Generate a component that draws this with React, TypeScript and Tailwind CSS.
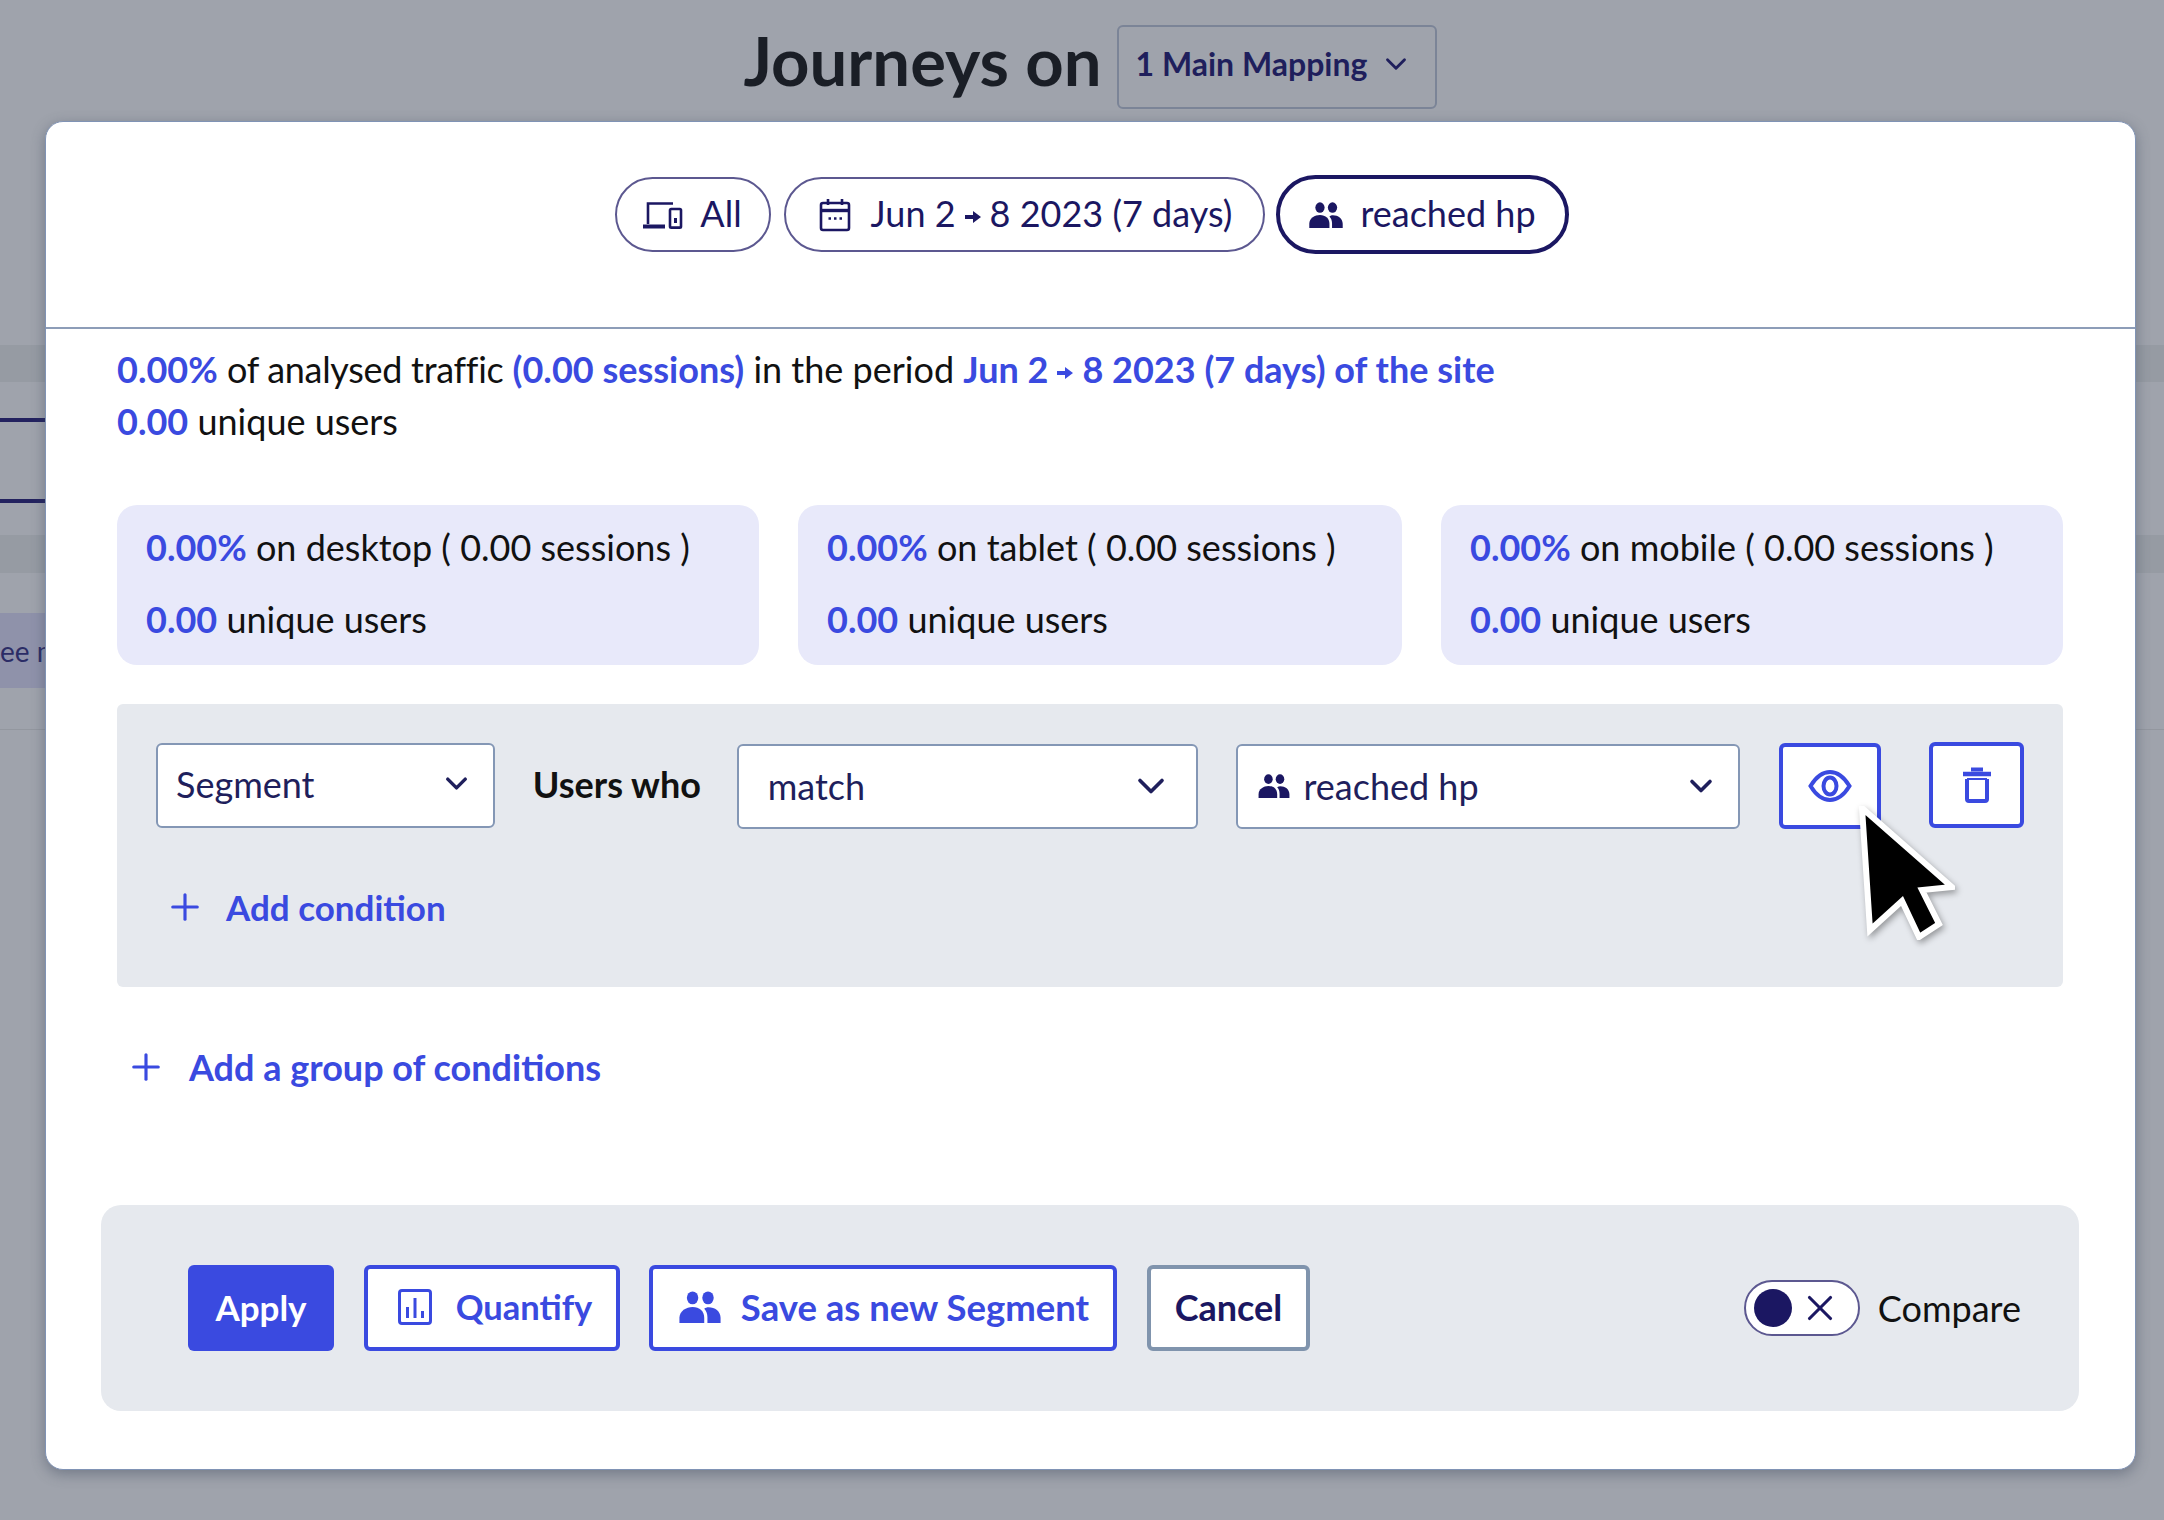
import { ChevronDown, Plus, X } from 'lucide-react';
import { twMerge } from 'tailwind-merge';

const font = { fontFamily: 'Lato, "Noto Sans", sans-serif' };

function DevicesIcon({ className }: { className?: string }) {
  return (
    <svg viewBox="0 0 40 30" className={className} fill="none" stroke="currentColor">
      <path d="M5 24V3.500h25" strokeWidth="2.600" />
      <path d="M0 26.500h22" strokeWidth="4" />
      <rect x="27" y="9" width="11" height="18.600" rx="1.200" strokeWidth="2.600" />
      <path d="M32.500 18v5" strokeWidth="3" />
    </svg>
  );
}

function CalendarIcon({ className }: { className?: string }) {
  return (
    <svg viewBox="0 0 32 34" className={className} fill="none" stroke="currentColor" strokeWidth="2.600">
      <rect x="2" y="5" width="28" height="27" rx="2" />
      <path d="M2 12.500h28" strokeWidth="3.400" />
      <path d="M9 1v6M23 1v6" />
      <path d="M9.500 20.500h2.500M15 20.500h2.500M20.500 20.500h2.500" />
    </svg>
  );
}

function PeopleIcon({ className }: { className?: string }) {
  return (
    <svg viewBox="0 0 36 28" className={className} fill="currentColor">
      <ellipse cx="11.500" cy="6" rx="5" ry="5.600" />
      <ellipse cx="25" cy="6" rx="5" ry="5.600" />
      <path d="M0 28v-4.500C0 17.500 6 14 11.500 14c3 0 5.600 1 7.500 2.600 1.700 1.600 2.700 4 2.700 6.900V28z" />
      <path d="M24.500 28v-5c0-3-1-5.600-2.800-7.500 1-.8 2.300-1.300 3.800-1.300 5.500 0 10.500 3.500 10.500 9.300V28z" />
    </svg>
  );
}

function EyeIcon({ className }: { className?: string }) {
  return (
    <svg viewBox="0 0 44 32" className={className} fill="none" stroke="currentColor" strokeWidth="4">
      <path d="M2.500 16C8 7 14 2 22 2s14 5 19.500 14C36 25 30 30 22 30S8 25 2.500 16z" />
      <ellipse cx="22" cy="16" rx="6.500" ry="8.500" />
    </svg>
  );
}

function TrashIcon({ className }: { className?: string }) {
  return (
    <svg viewBox="0 0 28 36" className={className} fill="none" stroke="currentColor">
      <path d="M0 7h28" strokeWidth="4.500" />
      <path d="M8 2.500h12" strokeWidth="4" />
      <path d="M4 12v20a2 2 0 0 0 2 2h16a2 2 0 0 0 2-2V12" strokeWidth="4" />
      <path d="M4 12h20" strokeWidth="2" />
    </svg>
  );
}

function ChartIcon({ className }: { className?: string }) {
  return (
    <svg viewBox="0 0 34 36" className={className} fill="none" stroke="currentColor">
      <rect x="1.500" y="1.500" width="31" height="33" rx="2.500" strokeWidth="3" />
      <path d="M9.500 18v11M17 9v20M24.500 22v7" strokeWidth="3" />
    </svg>
  );
}

function Arrow() {
  return (
    <svg viewBox="0 0 16 14" className="mx-[8px] inline-block h-[14px] w-[18px] align-[3px]" fill="currentColor">
      <path d="M0 5h8V1l8 6-8 6V9H0z" />
    </svg>
  );
}

function Pill({
  className,
  children,
}: {
  className?: string;
  children: React.ReactNode;
}) {
  return (
    <div
      className={twMerge(
        'flex h-[75px] items-center justify-center rounded-[38px] border-2 border-[#5c5890] bg-white pb-[3px] text-[36px] text-[#1b1762]',
        className,
      )}
    >
      {children}
    </div>
  );
}

function StatCard({ label, className }: { label: string; className: string }) {
  return (
    <div
      className={twMerge(
        'flex h-[160px] flex-col justify-between rounded-[20px] bg-[#e8e9fa] pb-[20px] pl-[29px] pt-[16px] text-[36px] leading-[52px] text-[#111]',
        className,
      )}
    >
      <div>
        <span className="font-bold text-[#3a4ae0]">0.00%</span> on {label} ( 0.00 sessions )
      </div>
      <div>
        <span className="font-bold text-[#3a4ae0]">0.00</span> unique users
      </div>
    </div>
  );
}

function OutlineButton({
  className,
  children,
}: {
  className?: string;
  children: React.ReactNode;
}) {
  return (
    <div
      className={twMerge(
        'flex h-[86px] items-center justify-center rounded-[6px] border-[4px] border-[#3a4ae0] bg-white text-[36px] font-bold text-[#3a4ae0]',
        className,
      )}
    >
      {children}
    </div>
  );
}

export default function App() {
  return (
    <div className="relative h-[1520px] w-[2164px] overflow-hidden bg-[#9fa3ac]" style={font}>
      {/* dimmed page behind the modal */}
      <div className="flex h-[345px] justify-center pl-[16px] pt-[25px]">
        <div className="flex h-[84px] items-center gap-[15px]">
          <span className="mt-[-14px] text-[67px] font-bold text-[#1a1e26]">Journeys on</span>
          <div className="flex h-[84px] w-[320px] items-center gap-[12px] rounded-[6px] border-2 border-[#7b8497] pb-[6px] pl-[17px] text-[32px] font-bold text-[#1f1f5c]">
            1 Main Mapping
            <ChevronDown className="h-[34px] w-[34px]" strokeWidth={2} />
          </div>
        </div>
      </div>
      <div className="h-[37px] bg-[#969ba3]" />
      <div className="h-[36px]" />
      <div className="h-[4px] w-[45px] bg-[#23225f]" />
      <div className="h-[77px]" />
      <div className="h-[4px] w-[45px] bg-[#23225f]" />
      <div className="h-[32px]" />
      <div className="h-[38px] bg-[#969ba3]" />
      <div className="h-[40px]" />
      <div className="flex h-[75px] w-[50px] items-center overflow-hidden whitespace-nowrap bg-[#8f92aa] text-[28px] text-[#2b2c66]">
        ee more
      </div>
      <div className="h-[42px] border-b border-[#93979f]" />

      <div className="absolute left-[45px] top-[121px] flex h-[1349px] w-[2091px] flex-col rounded-[18px] border border-[#8093b5] bg-white shadow-[0_4px_14px_rgba(60,70,90,0.45)]">
        <div className="flex h-[207px] shrink-0 items-center justify-center gap-[13px] border-b-2 border-[#8d9db8] pb-[20px] pl-[2px]">
          <Pill className="w-[156px] gap-[17px]">
            <DevicesIcon className="mt-[3px] h-[30px] w-[40px]" />
            All
          </Pill>
          <Pill className="w-[481px] gap-[20px] pl-[3px]">
            <CalendarIcon className="mt-[3px] h-[34px] w-[32px]" />
            <span>
              Jun 2<Arrow />8 2023 (7 days)
            </span>
          </Pill>
          <Pill className="-ml-[2px] h-[79px] w-[293px] gap-[16px] rounded-[40px] border-[4px] border-[#1b1762]">
            <PeopleIcon className="mt-[3px] h-[26px] w-[36px]" />
            reached hp
          </Pill>
        </div>

        <div className="flex flex-col pl-[71px] pr-[72px] pt-[14px]">
          <div className="text-[36px] leading-[52px] text-[#111]">
            <span className="font-bold text-[#3a4ae0]">0.00%</span>{' '}
            <span className="tracking-[-0.3px]">of analysed traffic</span>{' '}
            <span className="font-bold text-[#3a4ae0]">(0.00 sessions)</span> in the period{' '}
            <span className="font-bold text-[#3a4ae0]">
              Jun 2<Arrow />8 2023 (7 days) of the site
            </span>
          </div>
          <div className="text-[36px] leading-[52px] text-[#111]">
            <span className="font-bold text-[#3a4ae0]">0.00</span> unique users
          </div>

          <div className="mt-[58px] flex gap-[39px]">
            <StatCard label="desktop" className="w-[642px]" />
            <StatCard label="tablet" className="w-[604px]" />
            <StatCard label="mobile" className="w-[622px]" />
          </div>

          <div className="mt-[39px] h-[283px] rounded-[6px] bg-[#e6e9ee] px-[39px] pt-[37px]">
            <div className="flex items-center">
              <div className="flex h-[85px] w-[339px] items-center justify-between rounded-[6px] border-2 border-[#8497b5] bg-white pb-[3px] pl-[18px] pr-[19px] text-[36px] text-[#1f1f5c]">
                Segment
                <ChevronDown className="h-[35px] w-[35px]" strokeWidth={2.4} />
              </div>
              <span className="ml-[38px] w-[204px] pb-[3px] text-[36px] font-bold text-[#111]">Users who</span>
              <div className="mt-[2px] flex h-[85px] w-[462px] items-center justify-between rounded-[6px] border-2 border-[#8497b5] bg-white pl-[29px] pr-[23px] text-[36px] text-[#1f1f5c]">
                match
                <ChevronDown className="h-[44px] w-[44px]" strokeWidth={2} />
              </div>
              <div className="ml-[38px] mt-[2px] flex h-[85px] w-[504px] items-center rounded-[6px] border-2 border-[#8497b5] bg-white pl-[19px] pr-[19px] text-[36px] text-[#1f1f5c]">
                <PeopleIcon className="mr-[12px] h-[24px] w-[34px] text-[#1b1762]" />
                reached hp
                <ChevronDown className="ml-auto h-[36px] w-[36px]" strokeWidth={2.4} />
              </div>
              <OutlineButton className="ml-[39px] mt-[2px] w-[102px]">
                <EyeIcon className="h-[32px] w-[44px]" />
              </OutlineButton>
              <OutlineButton className="ml-[48px] w-[95px]">
                <TrashIcon className="h-[36px] w-[28px]" />
              </OutlineButton>
            </div>
            <div className="ml-[8px] mt-[52px] flex items-center gap-[20px] text-[35px] font-bold text-[#3a4ae0]">
              <Plus className="h-[42px] w-[42px]" strokeWidth={1.8} />
              Add condition
            </div>
          </div>

          <div className="ml-[8px] mt-[54px] flex h-[52px] items-center gap-[22px] text-[36px] font-bold text-[#3a4ae0]">
            <Plus className="h-[42px] w-[42px]" strokeWidth={1.8} />
            Add a group of conditions
          </div>

          <div className="-mx-[16px] mt-[112px] flex h-[206px] items-center rounded-[20px] bg-[#e6e9ee] pl-[87px] pr-[58px]">
            <div className="flex h-[86px] w-[146px] items-center justify-center rounded-[6px] bg-[#3a4ae0] pb-[2px] text-[35px] font-bold text-white">
              Apply
            </div>
            <OutlineButton className="ml-[30px] w-[256px] gap-[24px] pb-[2px] pl-[6px] text-[34.5px]">
              <ChartIcon className="h-[36px] w-[34px]" />
              Quantify
            </OutlineButton>
            <OutlineButton className="ml-[29px] w-[468px] gap-[18px] pb-[2px] text-[36.5px]">
              <PeopleIcon className="h-[32px] w-[46px]" />
              Save as new Segment
            </OutlineButton>
            <OutlineButton className="ml-[30px] w-[163px] border-[#8094ad] pb-[2px] text-[#1b1762]">Cancel</OutlineButton>
            <div className="ml-auto flex items-center gap-[18px]">
              <div className="flex h-[56px] w-[116px] items-center gap-[7px] rounded-[28px] border-2 border-[#5c5890] bg-white pl-[8px]">
                <div className="h-[38px] w-[38px] shrink-0 rounded-full bg-[#1b1762]" />
                <X className="h-[42px] w-[42px] shrink-0 text-[#1b1762]" strokeWidth={1.8} />
              </div>
              <span className="text-[36px] text-[#111]">Compare</span>
            </div>
          </div>
        </div>
      </div>

      {/* mouse pointer over the eye button */}
      <svg
        viewBox="0 0 96 134"
        className="absolute left-[1859px] top-[806px] h-[134px] w-[96px] drop-shadow-[2px_3px_3px_rgba(0,0,0,0.35)]"
      >
        <path
          d="M3 2 L93 81 L63 84 L80 118 L60 131 L43 95 L11 124 Z"
          fill="#000"
          stroke="#fff"
          strokeWidth="6"
          strokeLinejoin="miter"
        />
      </svg>
    </div>
  );
}
